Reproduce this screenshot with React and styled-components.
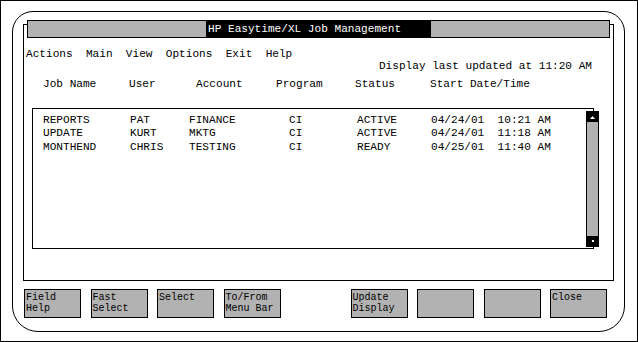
import React from "react";
import styled, { createGlobalStyle } from "styled-components";

const GlobalStyle = createGlobalStyle`
  html, body {
    margin: 0;
    padding: 0;
    background: #fff;
  }
  body {
    font-family: "Liberation Mono", "Courier New", monospace;
    color: #000;
  }
`;

const Screen = styled.div`
  width: 638px;
  height: 342px;
  box-sizing: border-box;
  border: 1px solid #000;
  padding: 10px 12px 9px 11px;
  background: #fff;
`;

const Frame = styled.div`
  height: 100%;
  box-sizing: border-box;
  border: 1px solid #000;
  border-radius: 21px 21px 26px 26px;
  padding: 12px 10px 0 10px;
  display: flex;
  flex-direction: column;
`;

const Window = styled.div`
  height: 257px;
  box-sizing: border-box;
  border: 1px solid #000;
  display: flex;
  flex-direction: column;
`;

const TitleBar = styled.div`
  margin: -5px 3px 0 3px;
  height: 18px;
  box-sizing: border-box;
  border: 1px solid #000;
  background: #b2b2b2;
  display: flex;
  justify-content: center;
`;

const Title = styled.div`
  width: 225px;
  background: #000;
  color: #fff;
  font-size: 11.1px;
  line-height: 16px;
  padding-left: 2px;
  box-sizing: border-box;
  white-space: pre;
`;

const MenuBar = styled.div`
  margin-top: 10px;
  padding-left: 2px;
  display: flex;
  gap: 13.3px;
  font-size: 11.1px;
  line-height: 13px;
`;

const MenuItem = styled.span``;

const Updated = styled.div`
  margin-top: -1px;
  padding-right: 21px;
  text-align: right;
  font-size: 11.1px;
  line-height: 13px;
  white-space: pre;
`;

const Cols = styled.div`
  display: grid;
  grid-template-columns: ${(p) => p.$cols};
  font-size: 11.1px;
  line-height: ${(p) => p.$lh || "13px"};
  white-space: pre;
`;

const Header = styled(Cols)`
  margin-top: 5px;
  padding-left: 19px;
`;

const ListBox = styled.div`
  position: relative;
  margin: 17px 19px 0 8px;
  height: 141px;
  box-sizing: border-box;
  border: 1px solid #000;
  padding: 4.5px 0 0 10px;
`;

const Scrollbar = styled.div`
  position: absolute;
  top: 2px;
  right: -6px;
  width: 13px;
  height: 136px;
  box-sizing: border-box;
  border: 1px solid #000;
  background: #b2b2b2;
  display: flex;
  flex-direction: column;
  justify-content: space-between;
`;

const ScrollCap = styled.div`
  height: 10px;
  background: #000;
  display: flex;
  align-items: center;
  justify-content: center;
`;

const KeyBar = styled.div`
  margin-top: 8px;
  padding: 0 7px 0 1px;
  display: flex;
  justify-content: space-between;
`;

const KeyGroup = styled.div`
  display: flex;
  gap: 9.5px;
`;

const Key = styled.div`
  width: 57px;
  height: 29px;
  box-sizing: border-box;
  border: 1px solid #000;
  background: #b2b2b2;
  padding: 2px 0 0 1px;
  font-size: 10px;
  line-height: 11px;
  white-space: pre-line;
`;

const menus = ["Actions", "Main", "View", "Options", "Exit", "Help"];

const headers = ["Job Name", "User", "Account", "Program", "Status", "Start Date/Time"];

const jobs = [
  ["REPORTS", "PAT", "FINANCE", "CI", "ACTIVE", "04/24/01  10:21 AM"],
  ["UPDATE", "KURT", "MKTG", "CI", "ACTIVE", "04/24/01  11:18 AM"],
  ["MONTHEND", "CHRIS", "TESTING", "CI", "READY", "04/25/01  11:40 AM"],
];

const leftKeys = ["Field\nHelp", "Fast\nSelect", "Select", "To/From\nMenu Bar"];
const rightKeys = ["Update\nDisplay", "", "", "Close"];

export default function App() {
  return (
    <>
      <GlobalStyle />
      <Screen>
        <Frame>
          <Window>
            <TitleBar>
              <Title>HP Easytime/XL Job Management</Title>
            </TitleBar>
            <MenuBar>
              {menus.map((m) => (
                <MenuItem key={m}>{m}</MenuItem>
              ))}
            </MenuBar>
            <Updated>Display last updated at 11:20 AM</Updated>
            <Header $cols="86px 67px 80px 79px 75px 1fr">
              {headers.map((h) => (
                <span key={h}>{h}</span>
              ))}
            </Header>
            <ListBox>
              {jobs.map((row, i) => (
                <Cols key={i} $cols="87px 59px 100px 68px 74px 1fr" $lh="13.5px">
                  {row.map((c, j) => (
                    <span key={j}>{c}</span>
                  ))}
                </Cols>
              ))}
              <Scrollbar>
                <ScrollCap>
                  <svg width="5" height="3" viewBox="0 0 5 3">
                    <polygon points="2.5,0 5,3 0,3" fill="#fff" />
                  </svg>
                </ScrollCap>
                <ScrollCap>
                  <svg width="2" height="2" viewBox="0 0 2 2">
                    <rect width="2" height="2" fill="#fff" />
                  </svg>
                </ScrollCap>
              </Scrollbar>
            </ListBox>
          </Window>
          <KeyBar>
            <KeyGroup>
              {leftKeys.map((k, i) => (
                <Key key={i}>{k}</Key>
              ))}
            </KeyGroup>
            <KeyGroup>
              {rightKeys.map((k, i) => (
                <Key key={i}>{k}</Key>
              ))}
            </KeyGroup>
          </KeyBar>
        </Frame>
      </Screen>
    </>
  );
}
